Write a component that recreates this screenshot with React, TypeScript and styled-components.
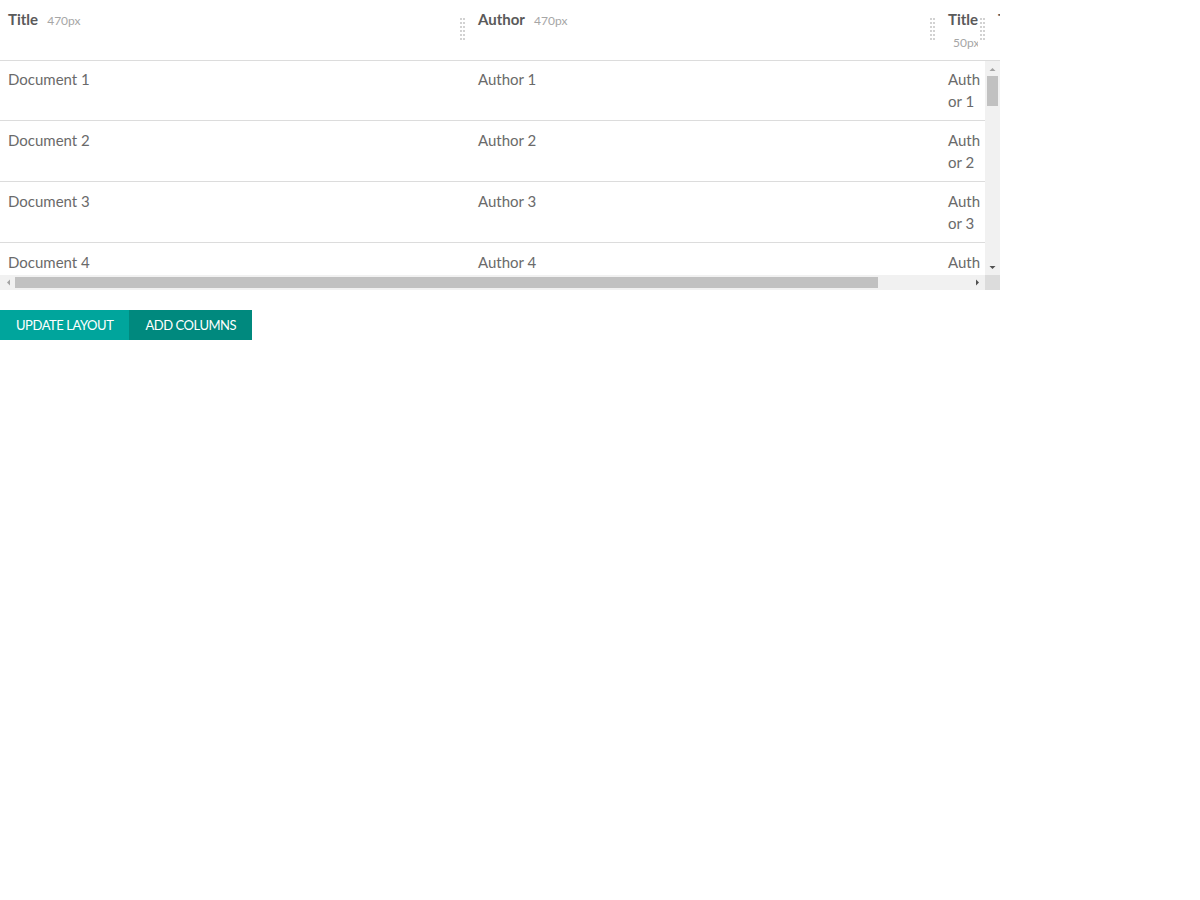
import React from "react";
import styled, { createGlobalStyle } from "styled-components";

const Global = createGlobalStyle`
  html, body { margin: 0; padding: 0; background: #fff; }
  body { font-family: "Source Sans Pro", Lato, "Liberation Sans", sans-serif; }
`;

type Col = { title: string; width: number; key: "title" | "author" };
const columns: Col[] = [
  { title: "Title", width: 470, key: "title" },
  { title: "Author", width: 470, key: "author" },
  { title: "Title", width: 50, key: "author" },
  { title: "Title", width: 100, key: "title" },
];

const rows = Array.from({ length: 22 }, (_, i) => ({
  title: `Document ${i + 1}`,
  author: `Author ${i + 1}`,
}));

const VIEW_W = 985;
const VIEW_H = 215;
const BAR = 15;
const ROW_H = 61;
const contentW = columns.reduce((s, c) => s + c.width, 0);
const contentH = rows.length * ROW_H;
const hThumb = Math.round(((VIEW_W - 2 * BAR) * VIEW_W) / contentW);
const vThumb = Math.round(((VIEW_H - 2 * BAR) * VIEW_H) / contentH);

const Page = styled.div`
  width: 1000px;
`;

const Grid = styled.div`
  width: 1000px;
  display: flex;
  flex-direction: column;
`;

const Header = styled.div`
  display: flex;
  width: 1000px;
  height: 60px;
  overflow: hidden;
  border-bottom: 1px solid #dcdcdc;
`;

const HeaderCell = styled.div<{ $w: number }>`
  position: relative;
  flex: 0 0 ${(p) => p.$w}px;
  width: ${(p) => p.$w}px;
  box-sizing: border-box;
  padding: 8px 8px;
  line-height: 22px;
  overflow-wrap: anywhere;
`;

const HeaderTitle = styled.span`
  font-size: 15px;
  font-weight: 700;
  color: #5a5a5a;
`;

const SizeLabel = styled.span`
  margin-left: 5px;
  font-size: 12px;
  font-weight: 400;
  color: #a6a6a6;
`;

const Grip = styled.span`
  position: absolute;
  top: 0;
  right: 0;
  width: 12px;
  height: 60px;
  background: #fff;
  cursor: col-resize;
  svg {
    display: block;
    margin-top: 18px;
    margin-left: 2px;
  }
`;

const ScrollFrame = styled.div`
  display: grid;
  grid-template-columns: ${VIEW_W}px ${BAR}px;
  grid-template-rows: ${VIEW_H - 1}px ${BAR}px;
  width: 1000px;
`;

const Viewport = styled.div`
  overflow: hidden;
`;

const Table = styled.div`
  width: ${contentW}px;
  margin-top: -1px;
`;

const Row = styled.div`
  display: flex;
  border-bottom: 1px solid #dcdcdc;
`;

const Cell = styled.div<{ $w: number }>`
  flex: 0 0 ${(p) => p.$w}px;
  width: ${(p) => p.$w}px;
  box-sizing: border-box;
  padding: 8px 8px;
  font-size: 15px;
  line-height: 22px;
  color: #6a6a6a;
  overflow-wrap: anywhere;
`;

const Track = styled.div<{ $vertical?: boolean }>`
  display: flex;
  flex-direction: ${(p) => (p.$vertical ? "column" : "row")};
  align-items: center;
  background: #f1f1f1;
`;

const ArrowBtn = styled.div`
  flex: 0 0 ${BAR}px;
  width: ${BAR}px;
  height: ${BAR}px;
  display: flex;
  align-items: center;
  justify-content: center;
`;

const ThumbArea = styled.div<{ $vertical?: boolean }>`
  flex: 1 1 auto;
  align-self: stretch;
  display: flex;
  flex-direction: ${(p) => (p.$vertical ? "column" : "row")};
  align-items: center;
`;

const Thumb = styled.div<{ $vertical?: boolean }>`
  background: #c1c1c1;
  flex: 0 0 auto;
  ${(p) => (p.$vertical ? "width: 11px;" : "height: 11px;")}
`;

const Corner = styled.div`
  background: #dcdcdc;
`;

const Buttons = styled.div`
  display: flex;
  margin-top: 20px;
`;

const Button = styled.button<{ $dark?: boolean }>`
  height: 30px;
  border: none;
  margin: 0;
  padding: 0 16px;
  font-family: "Source Sans Pro", Lato, "Liberation Sans", sans-serif;
  font-size: 13px;
  letter-spacing: -0.45px;
  color: #fff;
  text-transform: uppercase;
  background: ${(p) => (p.$dark ? "#00897e" : "#00a59c")};
  cursor: pointer;
`;

const GripDots = () => (
  <svg width="8" height="22" viewBox="0 0 8 22">
    {Array.from({ length: 6 }).map((_, r) =>
      [0, 3].map((x) => (
        <rect key={`${r}-${x}`} x={x} y={r * 4} width="2" height="2" fill="#d2d2d2" />
      ))
    )}
  </svg>
);

type Dir = "up" | "down" | "left" | "right";
const arrowPoints: Record<Dir, string> = {
  up: "0.5,4 3.5,1 6.5,4",
  down: "0.5,0 3.5,3 6.5,0",
  left: "4,0.5 1,3.5 4,6.5",
  right: "0,0.5 3,3.5 0,6.5",
};
const Arrow = ({ dir, disabled }: { dir: Dir; disabled?: boolean }) => {
  const horiz = dir === "left" || dir === "right";
  return (
    <ArrowBtn>
      <svg width={horiz ? 4 : 7} height={horiz ? 7 : 4} viewBox={horiz ? "0 0 4 7" : "0 0 7 4"}>
        <polygon points={arrowPoints[dir]} fill={disabled ? "#a3a3a3" : "#505050"} />
      </svg>
    </ArrowBtn>
  );
};

export default function App() {
  return (
    <Page>
      <Global />
      <Grid>
        <Header>
          {columns.map((c, i) => (
            <HeaderCell key={i} $w={c.width}>
              <HeaderTitle>{c.title}</HeaderTitle> <SizeLabel>{c.width}px</SizeLabel>
              <Grip>
                <GripDots />
              </Grip>
            </HeaderCell>
          ))}
        </Header>
        <ScrollFrame>
          <Viewport>
            <Table>
              {rows.map((r, i) => (
                <Row key={i}>
                  {columns.map((c, j) => (
                    <Cell key={j} $w={c.width}>
                      {r[c.key]}
                    </Cell>
                  ))}
                </Row>
              ))}
            </Table>
          </Viewport>
          <Track $vertical>
            <Arrow dir="up" disabled />
            <ThumbArea $vertical>
              <Thumb $vertical style={{ height: vThumb }} />
            </ThumbArea>
            <Arrow dir="down" />
          </Track>
          <Track>
            <Arrow dir="left" disabled />
            <ThumbArea>
              <Thumb style={{ width: hThumb }} />
            </ThumbArea>
            <Arrow dir="right" />
          </Track>
          <Corner />
        </ScrollFrame>
      </Grid>
      <Buttons>
        <Button>Update layout</Button>
        <Button $dark>Add columns</Button>
      </Buttons>
    </Page>
  );
}
